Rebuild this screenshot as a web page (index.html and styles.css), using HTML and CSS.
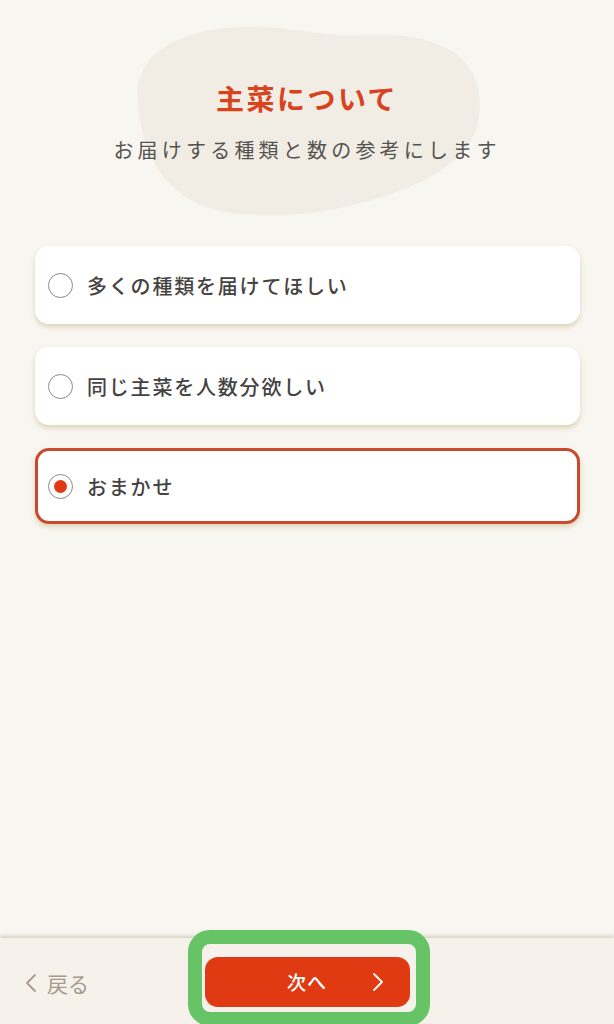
FILE: index.html
```html
<!DOCTYPE html>
<html lang="ja">
<head>
<meta charset="utf-8">
<link rel="stylesheet" href="styles.css">
</head>
<body>
<div class="page">
  <header class="intro">
    <svg class="blob" width="614" height="240" viewBox="0 0 614 240" aria-hidden="true">
      <path d="M138 105 C132 58 172 30 240 27 C290 25 322 38 362 35 C425 31 480 48 480 105 C480 152 440 178 382 197 C332 213 282 219 232 213 C170 205 143 160 138 105 Z" fill="#f1ede5"/>
    </svg>
    <h1 class="title">主菜について</h1>
    <p class="subtitle">お届けする種類と数の参考にします</p>
  </header>

  <main class="options">
    <div class="option">
      <span class="radio"></span>
      <span class="label">多くの種類を届けてほしい</span>
    </div>
    <div class="option">
      <span class="radio"></span>
      <span class="label">同じ主菜を人数分欲しい</span>
    </div>
    <div class="option selected">
      <span class="radio"><span class="dot"></span></span>
      <span class="label">おまかせ</span>
    </div>
  </main>

  <footer class="footer">
    <div class="back">
      <svg width="12" height="20" viewBox="0 0 12 20" aria-hidden="true"><path d="M10 2 L2 10 L10 18" fill="none" stroke="#a59c8c" stroke-width="1.8" stroke-linecap="round" stroke-linejoin="round"/></svg>
      <span>戻る</span>
    </div>
    <div class="next-wrap">
      <button class="next">
        <span class="next-label">次へ</span>
        <svg class="next-chev" width="12" height="20" viewBox="0 0 12 20" aria-hidden="true"><path d="M2 2 L10 10 L2 18" fill="none" stroke="#ffffff" stroke-width="1.8" stroke-linecap="round" stroke-linejoin="round"/></svg>
      </button>
    </div>
    <div class="highlight"></div>
  </footer>
</div>
</body>
</html>
```

FILE: styles.css
```css
* { box-sizing: border-box; }
html, body {
  margin: 0;
  padding: 0;
  background: #f8f6f1;
  font-family: "Noto Sans CJK JP", "Noto Sans", sans-serif;
}
.page {
  width: 614px;
  height: 1024px;
  display: flex;
  flex-direction: column;
  overflow: hidden;
}
.intro {
  position: relative;
  height: 246px;
  padding-top: 78px;
  display: flex;
  flex-direction: column;
  align-items: center;
}
.blob {
  position: absolute;
  left: 0;
  top: 0;
  z-index: 0;
}
.title {
  position: relative;
  z-index: 1;
  margin: 0;
  font-size: 28px;
  line-height: 40px;
  font-weight: 700;
  color: #d8431d;
  letter-spacing: 2.5px;
}
.subtitle {
  position: relative;
  z-index: 1;
  margin: 18px 0 0;
  font-size: 20px;
  line-height: 28px;
  font-weight: 400;
  color: #555350;
  letter-spacing: 4.2px;
}
.options {
  display: flex;
  flex-direction: column;
  gap: 23px;
  padding: 0 34px 0 35px;
  flex: 1;
}
.option {
  height: 78px;
  background: #ffffff;
  border-radius: 14px;
  box-shadow: 0 3px 5px rgba(170, 150, 80, 0.35);
  display: flex;
  align-items: center;
  padding-left: 13px;
  gap: 14px;
}
.option.selected {
  height: 76px;
  border: 3px solid #c84a2e;
  padding-left: 10px;
}
.radio {
  width: 25px;
  height: 25px;
  border-radius: 50%;
  border: 1.2px solid #8d8a86;
  background: #fff;
  display: flex;
  align-items: center;
  justify-content: center;
  flex: none;
}
.dot {
  width: 13px;
  height: 13px;
  border-radius: 50%;
  background: #e03a12;
}
.label {
  font-size: 20px;
  font-weight: 500;
  color: #454341;
  letter-spacing: 1.8px;
}
.footer {
  position: relative;
  height: 86px;
  flex: none;
  background: #f6f2eb;
  box-shadow: 0 -2px 4px rgba(170, 160, 140, 0.45);
  display: flex;
  align-items: center;
  padding-left: 25px;
}
.back {
  display: flex;
  align-items: center;
  gap: 10px;
  width: 180px;
  color: #a59c8c;
  font-size: 21px;
  margin-top: 4px;
}
.next-wrap {
  display: flex;
  margin-top: 1px;
}
.next {
  width: 205px;
  height: 50px;
  border: none;
  border-radius: 13px;
  background: #e03a12;
  color: #ffffff;
  font-family: inherit;
  font-size: 19px;
  font-weight: 500;
  display: flex;
  align-items: center;
  padding: 0;
  position: relative;
}
.next-label {
  margin-left: 82px;
  letter-spacing: 1px;
}
.next-chev {
  margin-left: 45px;
}
.highlight {
  position: absolute;
  left: 188px;
  top: -8px;
  width: 242px;
  height: 96px;
  border: 14px solid #66c466;
  border-radius: 22px;
  pointer-events: none;
}
```
